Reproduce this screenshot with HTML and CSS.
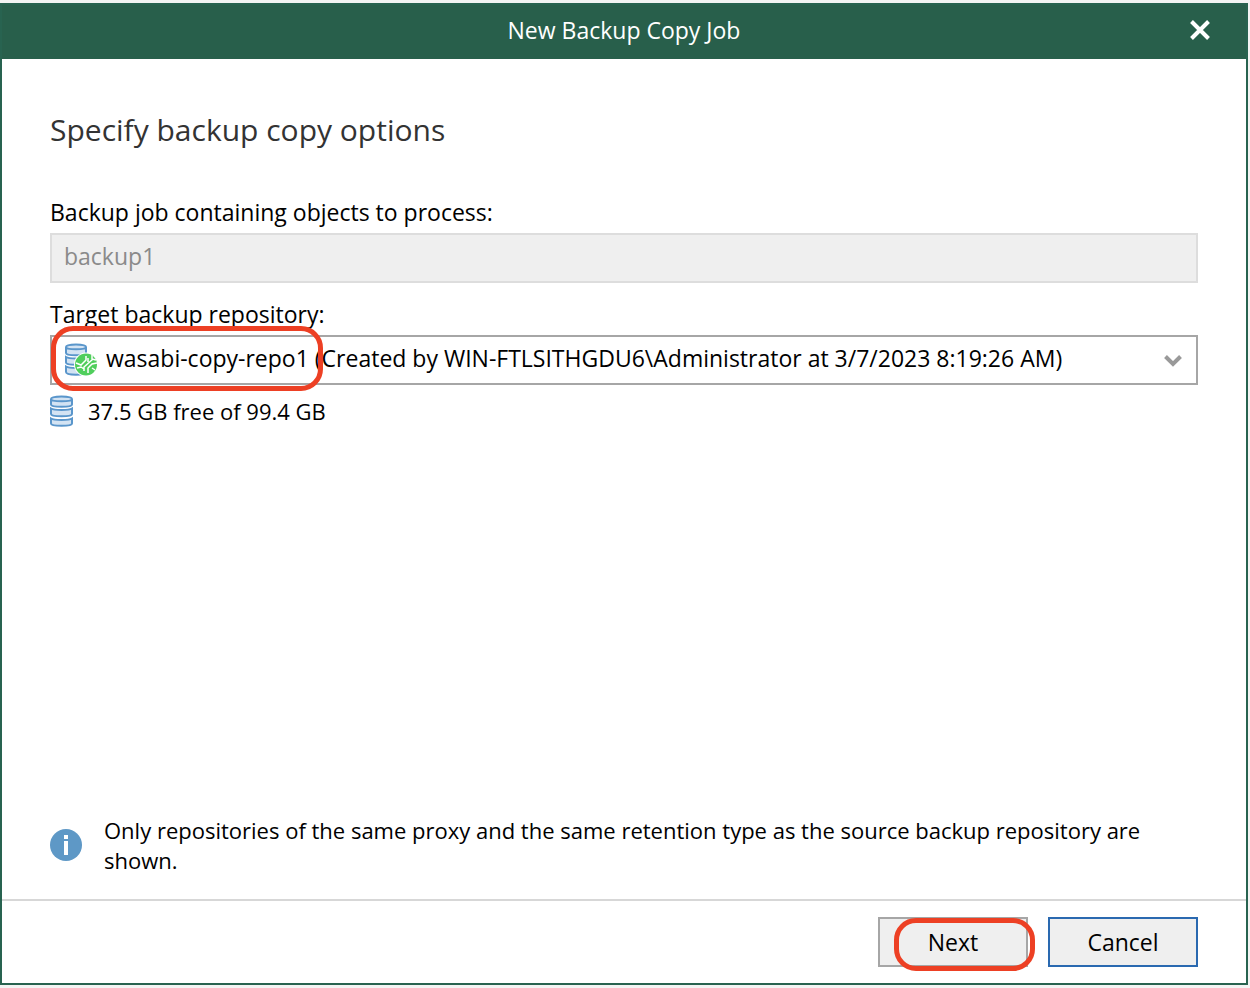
FILE: index.html
```html
<!DOCTYPE html>
<html lang="en">
<head>
<meta charset="utf-8">
<meta name="viewport" content="width=device-width, initial-scale=1">
<title>New Backup Copy Job</title>
<link rel="stylesheet" href="styles.css">
</head>
<body>
<main class="dialog">
  <header class="titlebar">
    <h1 class="title">New Backup Copy Job</h1>
    <button class="close" type="button" aria-label="Close">
      <svg width="20" height="20" viewBox="0 0 20 20" aria-hidden="true"><path d="M1.5 1.5l17 17M18.500 1.500l-17 17" fill="none" stroke="#fff" stroke-width="4"/></svg>
    </button>
  </header>
  <form class="form">
    <div class="content">
      <h2 class="heading">Specify backup copy options</h2>
      <label class="label" for="job">Backup job containing objects to process:</label>
      <input class="field" id="job" type="text" value="backup1" disabled>
      <label class="label" for="repo">Target backup repository:</label>
      <div class="combo">
        <select class="field select" id="repo">
          <option>wasabi-copy-repo1 (Created by WIN-FTLSITHGDU6\Administrator at 3/7/2023 8:19:26 AM)</option>
        </select>
        <svg class="repo-icon" width="34" height="34" viewBox="0 0 34 34" aria-hidden="true">
          <g fill="#d3e3f3" stroke="#5a96cb" stroke-width="2">
            <path d="M2 23.500v5.500c0 3.500 20 3.500 20 0v-5.500c-3 2-17 2-20 0z"/>
            <path d="M2 14v5.500c0 3 20 3 20 0V14c-3 2-17 2-20 0z"/>
            <path d="M2 4v6c0 3 20 3 20 0V4c0-3.500-20-3.500-20 0zM2 4c0 3 20 3 20 0"/>
          </g>
          <circle cx="22" cy="21.500" r="12" fill="#fff"/>
          <circle cx="22" cy="21.500" r="11" fill="#50ce5c"/>
          <path d="M12 20l5 2 5-5v-4M13 25l4-1 3 2M20 28v-4l9-8M24 19v-4M24 30v-5l4-4 5-1M28 25l3 2M28 12v4l4 1" fill="none" stroke="#fff" stroke-width="1.500"/>
        </svg>
        <svg class="chevron" width="18" height="12" viewBox="0 0 18 12" aria-hidden="true"><path d="M1.500 1.500L9 9l7.500-7.500" fill="none" stroke="#999" stroke-width="4"/></svg>
        <span class="mark mark-repo" aria-hidden="true"></span>
      </div>
      <p class="space">
        <svg width="24" height="32" viewBox="0 0 24 32" aria-hidden="true">
          <g fill="#d3e3f3" stroke="#5a96cb" stroke-width="2">
            <path d="M1 23.500v5c0 3 21 3 21 0v-5c-3 2-18 2-21 0z"/>
            <path d="M1 13.500v5.500c0 3 21 3 21 0v-5.500c-3 2-18 2-21 0z"/>
            <path d="M1 4v5.500c0 3 21 3 21 0V4c0-3.500-21-3.500-21 0zM1 4c0 3 21 3 21 0"/>
          </g>
        </svg>
        <span>37.5 GB free of 99.4 GB</span>
      </p>
      <p class="note">
        <svg class="info" width="32" height="32" viewBox="0 0 32 32" aria-hidden="true"><circle cx="16" cy="16" r="16" fill="#5e98c6"/><path d="M14 6h4v4h-4zM14 12h4v14h-4z" fill="#fff"/></svg>
        <span>Only repositories of the same proxy and the same retention type as the source backup repository are shown.</span>
      </p>
    </div>
    <footer class="footer">
      <div class="next">
        <button class="button" type="button">Next</button>
        <span class="mark mark-next" aria-hidden="true"></span>
      </div>
      <button class="button button-focus" type="button">Cancel</button>
    </footer>
  </form>
</main>
</body>
</html>
```
FILE: styles.css
```css
* { box-sizing: border-box; }
body {
  margin: 0;
  min-height: 100vh;
  display: flex;
  padding: 3px 2px 3px 0;
  background: #f3f4f3;
  color: #000;
  font: 23px/30px "Open Sans", "Noto Sans", sans-serif;
}
h1, h2, p { margin: 0; font-weight: 400; }
.dialog {
  flex: 1;
  display: flex;
  flex-direction: column;
  background: #fff;
  border: 2px solid #286350;
}
.titlebar {
  display: grid;
  grid-template-columns: 1fr auto 1fr;
  align-items: center;
  height: 54px;
  padding: 0 36px 4px;
  background: #285f4b;
  color: #fff;
}
.title { grid-column: 2; font-size: 23px; }
.close {
  justify-self: end;
  display: flex;
  padding: 0;
  border: 0;
  background: none;
}
.form { flex: 1; display: flex; flex-direction: column; }
.content {
  flex: 1;
  display: flex;
  flex-direction: column;
  padding: 51px 48px 24px;
}
.heading { margin-bottom: 47px; font-size: 30px; line-height: 40px; color: #333; }
.label { margin-bottom: 6px; }
.field {
  width: 100%;
  height: 50px;
  padding: 0 12px 4px;
  border: 2px solid #a6a6a6;
  border-radius: 0;
  background: #fff;
  color: #000;
  font: inherit;
}
.field:disabled { margin-bottom: 16px; border-color: #ddd; background: #efefef; color: #8a8a8a; }
.combo { position: relative; }
.select { display: block; appearance: none; padding: 0 48px 4px 54px; }
.repo-icon { position: absolute; left: 14px; top: 8px; pointer-events: none; }
.chevron { position: absolute; right: 16px; top: 20px; pointer-events: none; }
.mark { position: absolute; border: 5px solid #ed4024; pointer-events: none; }
.mark-repo { left: 1px; top: -9px; width: 272px; height: 65px; border-radius: 22px; }
.space { display: flex; align-items: center; gap: 14px; margin-top: 10px; font-size: 22px; }
.note { display: flex; align-items: center; gap: 22px; margin-top: auto; font-size: 22px; }
.info { flex: none; }
.footer {
  display: flex;
  justify-content: flex-end;
  gap: 20px;
  padding: 16px 48px;
  border-top: 2px solid #d7d7d7;
}
.next { position: relative; }
.button {
  width: 150px;
  height: 50px;
  padding: 0;
  border: 2px solid #a6a6a6;
  background: #efefef;
  color: #000;
  font: inherit;
}
.button-focus { border-color: #2a69b0; }
.mark-next { left: 16px; top: 1px; width: 141px; height: 53px; border-radius: 22px; }
```
